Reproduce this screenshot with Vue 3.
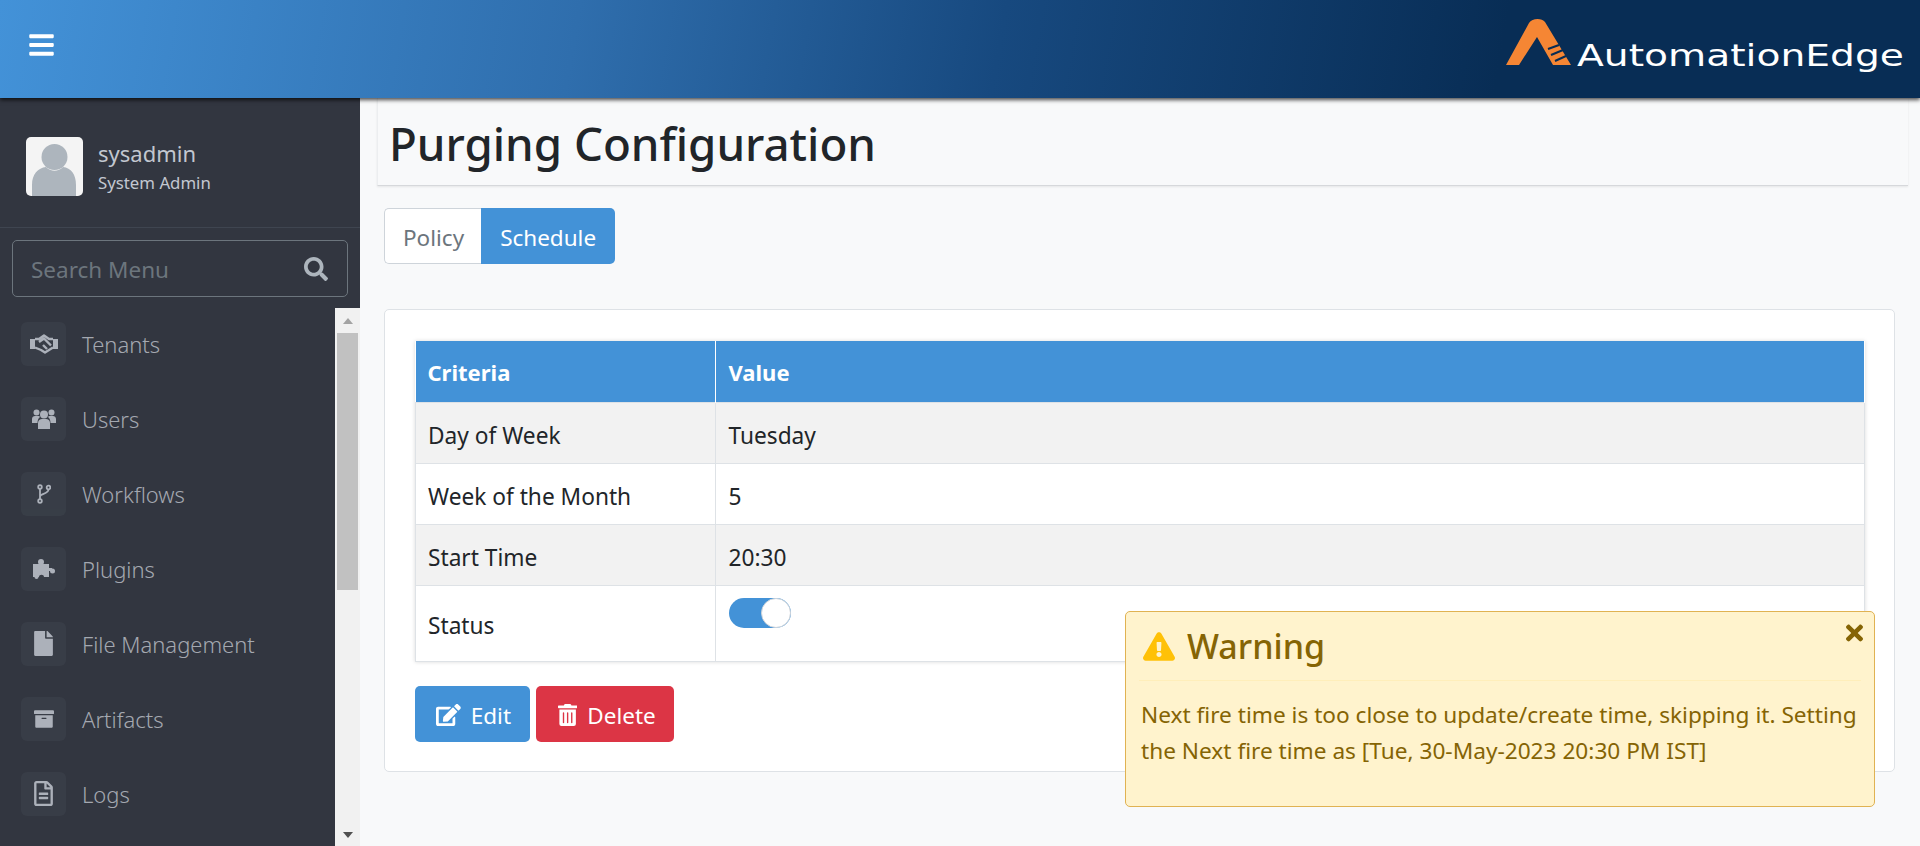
<script setup>
const menu = [
  { label: 'Tenants', icon: 'hand' },
  { label: 'Users', icon: 'users' },
  { label: 'Workflows', icon: 'branch' },
  { label: 'Plugins', icon: 'puzzle' },
  { label: 'File Management', icon: 'file' },
  { label: 'Artifacts', icon: 'archive' },
  { label: 'Logs', icon: 'log' }
]

const rows = [
  { name: 'Day of Week', value: 'Tuesday' },
  { name: 'Week of the Month', value: '5' },
  { name: 'Start Time', value: '20:30' }
]
</script>

<template>
  <div class="page">
    <header class="topbar">
      <svg class="burger" viewBox="0 0 448 512"><path fill="#fff" d="M16 132h416c8.837 0 16-7.163 16-16V76c0-8.837-7.163-16-16-16H16C7.163 60 0 67.163 0 76v40c0 8.837 7.163 16 16 16zm0 160h416c8.837 0 16-7.163 16-16v-40c0-8.837-7.163-16-16-16H16c-8.837 0-16 7.163-16 16v40c0 8.837 7.163 16 16 16zm0 160h416c8.837 0 16-7.163 16-16v-40c0-8.837-7.163-16-16-16H16c-8.837 0-16 7.163-16 16v40c0 8.837 7.163 16 16 16z"/></svg>
      <svg class="logo" viewBox="0 0 400 60" width="400" height="60">
        <path fill="#f58634" d="M0 46 23 4C26-1 36-1 39 3L65 46H47L31 18 13 46Z"/>
        <path stroke="#072c54" stroke-width="2" fill="none" d="M42 30 53 26M45 36 57 31M49 42 60 37"/>
        <text class="logo-text" x="71" y="47" textLength="327" lengthAdjust="spacingAndGlyphs">AutomationEdge</text>
      </svg>
    </header>

    <div class="main">
      <aside class="sidebar">
        <div class="user">
          <div class="avatar">
            <svg viewBox="0 0 57 59">
              <circle cx="28.5" cy="20" r="13" fill="#adb5bd"/>
              <path fill="#adb5bd" d="M6 59V48C6 37 12 31 20 30 25 35 32 35 37 30 45 31 50 37 50 48V59Z"/>
            </svg>
          </div>
          <div class="user-text">
            <div class="user-name">sysadmin</div>
            <div class="user-role">System Admin</div>
          </div>
        </div>

        <div class="search-wrap">
          <div class="search">
            <span>Search Menu</span>
            <svg viewBox="0 0 512 512"><path fill="#adb5bd" d="M505 442.7L405.3 343c-4.5-4.5-10.6-7-17-7H372c27.6-35.3 44-79.7 44-128C416 93.1 322.9 0 208 0S0 93.1 0 208s93.1 208 208 208c48.3 0 92.7-16.4 128-44v16.3c0 6.4 2.5 12.5 7 17l99.7 99.7c9.4 9.4 24.6 9.4 33.9 0l28.3-28.3c9.4-9.4 9.4-24.6.1-34zM208 336c-70.7 0-128-57.2-128-128 0-70.7 57.2-128 128-128 70.7 0 128 57.2 128 128 0 70.7-57.2 128-128 128z"/></svg>
          </div>
        </div>

        <div class="menu-area">
          <nav class="menu">
            <a v-for="item in menu" :key="item.label" class="menu-item">
              <span class="menu-icon">
                <svg v-if="item.icon === 'hand'" viewBox="0 0 28 20" width="28" height="20">
                  <path fill="#c2c7d0" d="M0 5H5V15H0ZM23 5H28V15H23Z"/>
                  <path fill="none" stroke="#c2c7d0" stroke-width="2.4" stroke-linejoin="round" d="M5 5 9 5 14 1.5 19 5H23M23 13.5 15 18.5 11 16 5 13.5M9 8 14 4.5 21 11.5M13 11 17 15"/>
                </svg>
                <svg v-else-if="item.icon === 'users'" viewBox="0 0 24 20" width="24" height="20">
                  <g fill="#c2c7d0">
                    <circle cx="4.5" cy="3.5" r="3"/><circle cx="19.5" cy="3.5" r="3"/>
                    <path d="M0 14V10C0 8 1.5 7 3 7H6C7 7 8 7.5 8 8 6.5 9 5.5 11 5.5 14ZM24 14V10C24 8 22.5 7 21 7H18C17 7 16 7.5 16 8 17.5 9 18.5 11 18.5 14Z"/>
                    <circle cx="12" cy="5.5" r="4"/>
                    <path d="M6 20V14C6 11.5 8 10 10 10H14C16 10 18 11.5 18 14V20Z"/>
                  </g>
                </svg>
                <svg v-else-if="item.icon === 'branch'" viewBox="0 0 14 20" width="14" height="20">
                  <g fill="none" stroke="#c2c7d0" stroke-width="1.8">
                    <circle cx="3" cy="3" r="1.8"/><circle cx="3" cy="17" r="1.8"/><circle cx="11.5" cy="3.5" r="1.8"/>
                    <path d="M3 5V15M3 12.5C3 9.5 11.5 10 11.5 5.5"/>
                  </g>
                </svg>
                <svg v-else-if="item.icon === 'puzzle'" viewBox="0 0 22 20" width="22" height="20">
                  <g fill="#c2c7d0">
                    <circle cx="8" cy="3" r="3"/><path d="M0 5H16V9H19V12H16V18H11C11 15 6 15 6 18H0Z"/><circle cx="19.5" cy="12" r="2.5"/><circle cx="3.5" cy="18" r="2"/>
                  </g>
                </svg>
                <svg v-else-if="item.icon === 'file'" viewBox="0 0 384 512" width="19" height="25"><path fill="#c2c7d0" d="M224 136V0H24C10.7 0 0 10.7 0 24v464c0 13.3 10.7 24 24 24h336c13.3 0 24-10.7 24-24V160H248c-13.2 0-24-10.8-24-24zm160-14.1v6.1H256V0h6.1c6.4 0 12.5 2.5 17 7l97.9 98c4.5 4.5 7 10.6 7 16.9z"/></svg>
                <svg v-else-if="item.icon === 'archive'" viewBox="0 0 512 512" width="20" height="20"><path fill="#c2c7d0" d="M32 448c0 17.7 14.3 32 32 32h384c17.7 0 32-14.3 32-32V160H32v288zm160-212c0-6.6 5.4-12 12-12h104c6.6 0 12 5.4 12 12v8c0 6.6-5.4 12-12 12H204c-6.6 0-12-5.4-12-12v-8zM480 32H32C14.3 32 0 46.3 0 64v48c0 8.8 7.2 16 16 16h480c8.8 0 16-7.2 16-16V64c0-17.7-14.3-32-32-32z"/></svg>
                <svg v-else viewBox="0 0 384 512" width="19" height="25"><path fill="#c2c7d0" d="M288 248v28c0 6.6-5.4 12-12 12H108c-6.6 0-12-5.4-12-12v-28c0-6.6 5.4-12 12-12h168c6.6 0 12 5.4 12 12zm-12 72H108c-6.6 0-12 5.4-12 12v28c0 6.6 5.4 12 12 12h168c6.6 0 12-5.4 12-12v-28c0-6.6-5.4-12-12-12zm108-188.1V464c0 26.5-21.5 48-48 48H48c-26.5 0-48-21.5-48-48V48C0 21.5 21.5 0 48 0h204.1C264.8 0 277 5.1 286 14.1L369.9 98c9 8.9 14.1 21.2 14.1 33.9zm-128-80V128h76.1L256 51.9zM336 464V176H232c-13.3 0-24-10.7-24-24V48H48v416h288z"/></svg>
              </span>
              <span class="menu-label">{{ item.label }}</span>
            </a>
          </nav>
          <div class="scroll-track">
            <span class="arrow-up"></span>
            <span class="scroll-thumb"></span>
            <span class="arrow-down"></span>
          </div>
        </div>
      </aside>

      <main class="content">
        <div class="title-bar"><h1>Purging Configuration</h1></div>

        <div class="tabs">
          <button class="tab">Policy</button>
          <button class="tab active">Schedule</button>
        </div>

        <section class="card">
          <table>
            <thead>
              <tr><th class="col-a">Criteria</th><th>Value</th></tr>
            </thead>
            <tbody>
              <tr v-for="row in rows" :key="row.name">
                <td>{{ row.name }}</td>
                <td>{{ row.value }}</td>
              </tr>
              <tr class="status-row">
                <td>Status</td>
                <td class="switch-cell"><span class="switch"><span class="knob"></span></span></td>
              </tr>
            </tbody>
          </table>

          <div class="actions">
            <button class="btn edit">
              <svg viewBox="0 0 576 512"><path fill="#fff" d="M402.6 83.2l90.2 90.2c3.8 3.8 3.8 10 0 13.8L274.4 405.6l-92.8 10.3c-12.4 1.4-22.9-9.1-21.5-21.5l10.3-92.8L388.8 83.2c3.8-3.8 10-3.8 13.8 0zm162-22.9l-48.8-48.8c-15.2-15.2-39.9-15.2-55.2 0l-35.4 35.4c-3.8 3.8-3.8 10 0 13.8l90.2 90.2c3.8 3.8 10 3.8 13.8 0l35.4-35.4c15.2-15.3 15.2-40 0-55.2zM384 346.2V448H64V128h229.8c3.2 0 6.2-1.3 8.5-3.5l40-40c7.6-7.6 2.2-20.5-8.5-20.5H48C21.5 64 0 85.5 0 112v352c0 26.5 21.5 48 48 48h352c26.5 0 48-21.5 48-48V306.2c0-10.7-12.9-16-20.5-8.5l-40 40c-2.2 2.3-3.5 5.3-3.5 8.5z"/></svg>
              Edit
            </button>
            <button class="btn delete">
              <svg viewBox="0 0 448 512"><path fill="#fff" d="M32 464a48 48 0 0 0 48 48h288a48 48 0 0 0 48-48V128H32zm272-256a16 16 0 0 1 32 0v224a16 16 0 0 1-32 0zm-96 0a16 16 0 0 1 32 0v224a16 16 0 0 1-32 0zm-96 0a16 16 0 0 1 32 0v224a16 16 0 0 1-32 0zM432 32H312l-9.4-18.7A24 24 0 0 0 281.1 0H166.8a23.72 23.72 0 0 0-21.4 13.3L136 32H16A16 16 0 0 0 0 48v32a16 16 0 0 0 16 16h416a16 16 0 0 0 16-16V48a16 16 0 0 0-16-16z"/></svg>
              Delete
            </button>
          </div>
        </section>
      </main>
    </div>

    <div class="toast">
      <svg class="toast-close" viewBox="0 0 352 512"><path fill="#856404" d="M242.72 256l100.07-100.07c12.28-12.28 12.28-32.19 0-44.48l-22.24-22.24c-12.28-12.28-32.19-12.28-44.48 0L176 189.28 75.93 89.21c-12.28-12.28-32.19-12.28-44.48 0L9.21 111.45c-12.28 12.28-12.28 32.19 0 44.48L109.28 256 9.21 356.07c-12.28 12.28-12.28 32.19 0 44.48l22.24 22.24c12.28 12.28 32.2 12.28 44.48 0L176 322.72l100.07 100.07c12.28 12.28 32.2 12.28 44.48 0l22.24-22.24c12.28-12.28 12.28-32.19 0-44.48L242.72 256z"/></svg>
      <div class="toast-head">
        <svg viewBox="0 0 576 512"><path fill="#ffc107" d="M569.517 440.013C587.975 472.007 564.806 512 527.94 512H48.054c-36.937 0-59.999-40.055-41.577-71.987L246.423 23.985c18.467-32.009 64.72-31.951 83.154 0l239.94 416.028zM288 354c-25.405 0-46 20.595-46 46s20.595 46 46 46 46-20.595 46-46-20.595-46-46-46zm-43.673-165.346l7.418 136c.347 6.364 5.609 11.346 11.982 11.346h48.546c6.373 0 11.635-4.982 11.982-11.346l7.418-136c.375-6.874-5.098-12.654-11.982-12.654h-63.383c-6.884 0-12.356 5.78-11.981 12.654z"/></svg>
        <span>Warning</span>
      </div>
      <p>Next fire time is too close to update/create time, skipping it. Setting the Next fire time as [Tue, 30-May-2023 20:30 PM IST]</p>
    </div>
  </div>
</template>

<style>
html, body { margin: 0; overflow: hidden; }
</style>

<style scoped>
.page {
  position: relative;
  height: 846px;
  display: flex;
  flex-direction: column;
  overflow: hidden;
  background: #f8f9fa;
  color: #212529;
  font-family: "Noto Sans", "Open Sans", sans-serif;
}

.topbar {
  position: relative;
  z-index: 2;
  flex: none;
  height: 98px;
  display: flex;
  align-items: center;
  justify-content: space-between;
  padding: 0 14px 8px 29px;
  box-sizing: border-box;
  background: linear-gradient(100deg, #4392d8 0%, #2f6ead 30%, #17497f 52%, #082d55 78%);
  box-shadow: 0 2px 4px rgba(0, 0, 0, 0.7);
}
.burger { width: 25px; height: 28px; }
.logo { align-self: flex-start; margin-top: 19px; }
.logo-text {
  font-family: "DejaVu Sans", sans-serif;
  font-size: 30px;
  fill: #fff;
}

.main { flex: 1; display: flex; min-height: 0; }

.sidebar {
  flex: none;
  width: 360px;
  background: #323640;
  display: flex;
  flex-direction: column;
}
.user {
  display: flex;
  align-items: center;
  gap: 15px;
  height: 130px;
  padding: 0 26px;
  box-sizing: border-box;
  border-bottom: 1px solid #3f4550;
}
.avatar {
  width: 57px;
  height: 59px;
  border-radius: 5px;
  background: #f4f4f4;
  overflow: hidden;
  margin-top: 8px;
}
.avatar svg { display: block; width: 57px; height: 59px; }
.user-text { margin-top: 11px; }
.user-name { font-size: 22px; line-height: 30px; color: #c2c7d0; }
.user-role { font-size: 16.8px; line-height: 30px; color: #c2c7d0; }

.search-wrap { padding: 12px 12px 11px; }
.search {
  height: 57px;
  box-sizing: border-box;
  border: 1px solid #6c757d;
  border-radius: 5px;
  padding: 2px 19px 0 18px;
  display: flex;
  align-items: center;
  justify-content: space-between;
  font-size: 22.5px;
  color: #6c757d;
}
.search svg { width: 24px; height: 24px; margin-top: -2px; }

.menu-area { flex: 1; display: flex; min-height: 0; }
.menu { flex: 1; overflow: hidden; margin-top: -2px; }
.menu-item {
  display: flex;
  align-items: center;
  height: 75px;
  padding-left: 21px;
  gap: 16px;
}
.menu-icon {
  width: 45px;
  height: 44px;
  flex: none;
  display: flex;
  align-items: center;
  justify-content: center;
  border-radius: 6px;
  background: #3a3f49;
  opacity: 0.85;
}
.menu-label { font-size: 22px; font-weight: 300; color: #a4a8b0; }

.scroll-track {
  flex: none;
  width: 25px;
  background: #f1f1f1;
  display: flex;
  flex-direction: column;
  align-items: center;
}
.scroll-thumb {
  width: 21px;
  height: 257px;
  background: #c1c1c1;
  margin-top: 9px;
}
.arrow-up, .arrow-down { width: 0; height: 0; border-left: 5.5px solid transparent; border-right: 5.5px solid transparent; }
.arrow-up { margin-top: 10px; border-bottom: 6px solid #a3a3a3; }
.arrow-down { margin-top: auto; margin-bottom: 8px; border-top: 6px solid #505050; }

.content { flex: 1; min-width: 0; padding-left: 17px; padding-right: 12px; }
.title-bar {
  height: 88px;
  box-sizing: border-box;
  padding-left: 11px;
  border-bottom: 1px solid #d6d8db;
  border-left: 1px solid #eceef0;
  box-shadow: 0 1px 2px rgba(0, 0, 0, 0.08);
}
h1 {
  margin: 0;
  font-size: 45.7px;
  font-weight: 500;
  line-height: 90px;
  color: #212529;
}

.tabs { display: flex; margin: 22px 0 0 7px; }
.tab {
  height: 56px;
  border: 1px solid #ced4da;
  border-right: 0;
  background: #fff;
  color: #6c757d;
  font: inherit;
  font-size: 22.5px;
  padding: 2px 17px 0 18px;
  border-radius: 5px 0 0 5px;
}
.tab.active {
  background: #4392d7;
  border: 0;
  color: #fff;
  padding: 2px 19px 0;
  border-radius: 0 5px 5px 0;
}

.card {
  margin: 45px 0 0 7px;
  width: 1511px;
  height: 463px;
  box-sizing: border-box;
  padding: 31px 29px 0 30px;
  background: #fff;
  border: 1px solid #dee2e6;
  border-radius: 5px;
}
table {
  width: 100%;
  border-collapse: collapse;
  font-size: 22.7px;
  box-shadow: 0 0 4px rgba(0, 0, 0, 0.15);
}
th {
  height: 61px;
  padding: 0 12px 0 13px;
  background: #4392d7;
  color: #fff;
  text-align: left;
  font-size: 22px;
  font-weight: 700;
  border-right: 1px solid #fff;
}
th.col-a { width: 275px; padding-left: 12px; }
td {
  box-sizing: border-box;
  height: 61px;
  padding: 4px 12px 0 13px;
  border: 1px solid #dee2e6;
}
td:first-child { padding-left: 12px; }
tbody tr:nth-child(odd) td { background: #f2f2f2; }
.status-row td { height: 76px; background: #fff; }
td.switch-cell { vertical-align: top; padding-top: 12px; }
.switch {
  display: block;
  position: relative;
  width: 62px;
  height: 30px;
  border-radius: 15px;
  background: #4392d7;
}
.knob {
  position: absolute;
  right: 0;
  top: 0;
  width: 30px;
  height: 30px;
  box-sizing: border-box;
  border-radius: 50%;
  background: #fff;
  border: 1px solid #ced4da;
}

.actions { display: flex; gap: 6px; margin-top: 24px; }
.btn {
  height: 56px;
  border: 0;
  border-radius: 5px;
  color: #fff;
  font: inherit;
  font-size: 22.5px;
  display: flex;
  align-items: center;
  gap: 10px;
  padding: 2px 19px 0 21px;
}
.btn svg { width: auto; height: 22px; }
.edit { background: #4392d7; }
.delete { background: #dc3545; padding-left: 22px; padding-right: 18px; }

.toast {
  position: absolute;
  left: 1125px;
  top: 611px;
  width: 750px;
  height: 196px;
  box-sizing: border-box;
  padding: 0 10px;
  background: #fff3cd;
  border: 1px solid #e0b252;
  border-radius: 5px;
  color: #856404;
}
.toast-close { position: absolute; right: 11px; top: 8px; width: 17px; height: 26px; }
.toast-head {
  height: 68px;
  display: flex;
  align-items: center;
  gap: 12px;
  margin: 0 3px;
  border-bottom: 1px solid #ffeeba;
  font-size: 34px;
  font-weight: 500;
}
.toast-head svg { width: 32px; height: 29px; margin-left: 4px; }
.toast p {
  margin: 16px 0 0 5px;
  font-size: 22.65px;
  line-height: 36px;
}
</style>
